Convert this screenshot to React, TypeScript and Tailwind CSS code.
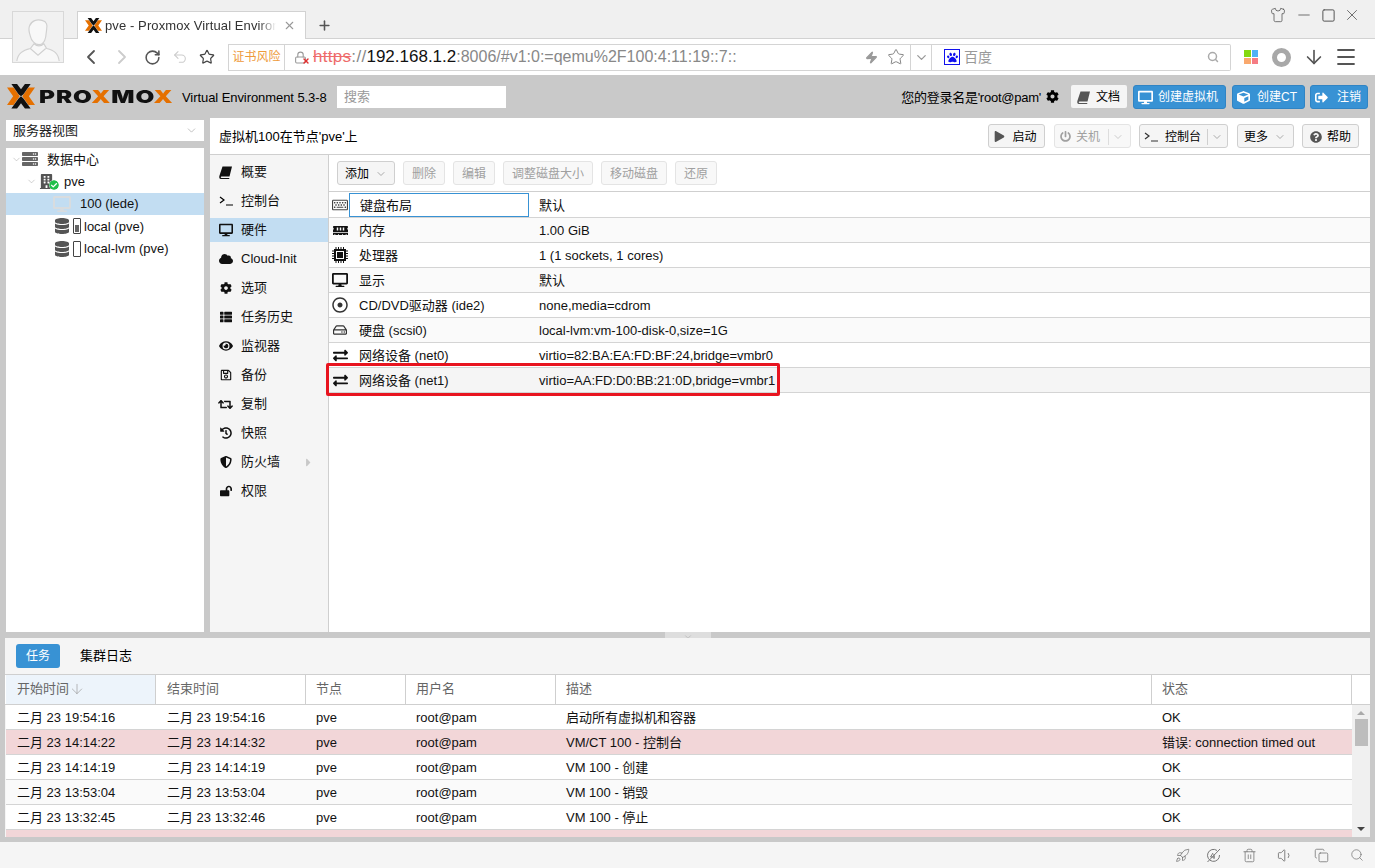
import React from "react";
import { ChevronLeft, ChevronRight, ChevronDown, RotateCw, Undo2, Star, Plus, X, Shirt, Minus, Square, Search, ArrowDown, Menu, Zap, Lock, Rocket, Trash2, Volume1, Copy } from "lucide-react";
import { FaDesktop, FaCloud, FaCog, FaThList, FaEye, FaRegSave, FaRetweet, FaHistory, FaShieldAlt, FaLockOpen, FaExchangeAlt, FaRegHdd, FaMemory, FaRegKeyboard, FaCube, FaSignOutAlt, FaPlay, FaPowerOff, FaQuestionCircle, FaDatabase, FaServer, FaBuilding, FaCheckCircle, FaPaw, FaCaretRight, FaRegDotCircle } from "react-icons/fa";

const font = "[font-family:'Liberation_Sans','Noto_Sans_CJK_SC',sans-serif]";

function PxLogo({ s }: { s: number }) {
  return (
    <svg width={s} height={s * 0.88} viewBox="0 0 32 28" className="shrink-0">
      <path d="M0 4h7.500l7 10-7 10H0l7-10z" fill="#e57000" />
      <path d="M32 4h-7.500l-7 10 7 10H32l-7-10z" fill="#e57000" />
      <path d="M5 0h6.500L16 6l4.500-6H27L18.800 11.500 16 14l-2.800-2.500zM5 28h6.500L16 22l4.500 6H27l-8.200-11.500L16 14l-2.800 2.500z" fill="#111" />
    </svg>
  );
}

function BookIcon({ c = "#111" }: { c?: string }) {
  return (
    <svg width="13" height="13" viewBox="0 0 13 13" className="shrink-0">
      <path d="M3.500 0.500H13L10.500 10.500H2.500C1.500 10.500 1.500 12 2.500 12H10.500L10 13H2C0 13 0 11 0.500 9.500z" fill={c} />
    </svg>
  );
}

function ChipIcon() {
  return (
    <svg width="16" height="16" viewBox="0 0 16 16" className="shrink-0">
      <rect x="2" y="2" width="12" height="12" fill="#111" />
      <rect x="4" y="4" width="8" height="8" fill="#fff" />
      <rect x="5" y="5" width="6" height="6" fill="#111" />
      <path d="M0 4h2M0 6.500h2M0 9h2M0 11.500h2M14 4h2M14 6.500h2M14 9h2M14 11.500h2M4 0v2M6.500 0v2M9 0v2M11.500 0v2M4 14v2M6.500 14v2M9 14v2M11.500 14v2" stroke="#111" strokeWidth="1" />
    </svg>
  );
}

function DialIcon() {
  return (
    <svg width="15" height="15" viewBox="0 0 15 15" fill="none" stroke="currentColor" strokeWidth="1" className="shrink-0">
      <path d="M11 2.500A6 6 0 1 0 13.500 7" />
      <path d="M1.500 14L14 1" />
      <path d="M7 5L4.500 9H9M8 6v5" />
    </svg>
  );
}

function Terminal({ c = "text-black" }: { c?: string }) {
  return (
    <svg width="14" height="10" viewBox="0 0 14 10" fill="none" stroke="currentColor" strokeWidth="1.200" className={`shrink-0 ${c}`}>
      <path d="M1 1l4 3-4 3M7 9h7" />
    </svg>
  );
}

function TopBtn({ icon, label, w, gap }: { icon: React.ReactNode; label: string; w: string; gap: string }) {
  return (
    <div className={`${w} ${gap} h-[24px] pt-px rounded-[3px] bg-[#3892d4] border border-[#3084c4] text-white text-[12px] flex items-center pl-[4px]`}>
      {icon}
      <span>{label}</span>
    </div>
  );
}

function GreyBtn({ w, children, off }: { w: string; children: React.ReactNode; off?: boolean }) {
  return (
    <div className={`${w} h-[24px] pt-px rounded-[3px] border text-[12px] flex items-center justify-center shrink-0 ${off ? "bg-[#f8f8f8] border-[#e4e4e4] text-[#a0a0a0]" : "bg-[#f5f5f5] border-[#cfcfcf] text-black"}`}>
      {children}
    </div>
  );
}

const menu: [React.ReactNode, string][] = [
  [<BookIcon />, "概要"],
  [<Terminal />, "控制台"],
  [<FaDesktop size={14} />, "硬件"],
  [<FaCloud size={14} />, "Cloud-Init"],
  [<FaCog size={12} />, "选项"],
  [<FaThList size={12} />, "任务历史"],
  [<FaEye size={14} />, "监视器"],
  [<FaRegSave size={12} />, "备份"],
  [<FaRetweet size={15} />, "复制"],
  [<FaHistory size={12} />, "快照"],
  [<FaShieldAlt size={12} />, "防火墙"],
  [<FaLockOpen size={12} />, "权限"],
];

const hw: [React.ReactNode, string, string][] = [
  [<FaRegKeyboard size={16} className="text-[#444]" />, "键盘布局", "默认"],
  [<FaMemory size={15} />, "内存", "1.00 GiB"],
  [<ChipIcon />, "处理器", "1 (1 sockets, 1 cores)"],
  [<FaDesktop size={16} />, "显示", "默认"],
  [<FaRegDotCircle size={16} className="text-[#333]" />, "CD/DVD驱动器 (ide2)", "none,media=cdrom"],
  [<FaRegHdd size={14} className="text-[#333]" />, "硬盘 (scsi0)", "local-lvm:vm-100-disk-0,size=1G"],
  [<FaExchangeAlt size={15} />, "网络设备 (net0)", "virtio=82:BA:EA:FD:BF:24,bridge=vmbr0"],
  [<FaExchangeAlt size={15} />, "网络设备 (net1)", "virtio=AA:FD:D0:BB:21:0D,bridge=vmbr1"],
];

const tasks = [
  ["二月 23 19:54:16", "二月 23 19:54:16", "pve", "root@pam", "启动所有虚拟机和容器", "OK"],
  ["二月 23 14:14:22", "二月 23 14:14:32", "pve", "root@pam", "VM/CT 100 - 控制台", "错误: connection timed out"],
  ["二月 23 14:14:19", "二月 23 14:14:19", "pve", "root@pam", "VM 100 - 创建", "OK"],
  ["二月 23 13:53:04", "二月 23 13:53:04", "pve", "root@pam", "VM 100 - 销毁", "OK"],
  ["二月 23 13:32:45", "二月 23 13:32:46", "pve", "root@pam", "VM 100 - 停止", "OK"],
  ["", "", "", "", "", ""],
];
const cols = ["w-[150px] pl-[11px]", "w-[150px] pl-[11px]", "w-[100px] pl-[10px]", "w-[150px] pl-[10px]", "w-[596px] pl-[10px]", "w-[200px] pl-[10px]"];
const heads = ["开始时间", "结束时间", "节点", "用户名", "描述", "状态"];

export default function App() {
  return (
    <div className={`w-[1375px] h-[868px] overflow-hidden flex flex-col relative text-[13px] text-[#111] bg-white ${font}`}>
      {/* browser tab strip */}
      <div className="h-[39px] shrink-0 bg-[#f0f0f0] border-b border-[#d2d2d2] flex items-end pl-[77px]">
        <div className="w-[229px] h-[28px] -mb-px bg-white border border-b-0 border-[#d2d2d2] flex items-center pl-[7px] pr-[9px] gap-[3px] text-[13px] text-[#333]">
          <PxLogo s={17} />
          <span className="whitespace-nowrap overflow-hidden flex-1 tracking-[0.1px] mr-[4px] [mask-image:linear-gradient(to_right,black_90%,transparent)]">pve - Proxmox Virtual Enviror</span>
          <X size={13} className="text-[#999] shrink-0" />
        </div>
        <Plus size={15} className="text-[#555] ml-[11px] mb-[5px]" strokeWidth={2.5} />
        <div className="flex-1" />
        <div className="flex items-center text-[#555] pr-[14px] mb-[14px]">
          <Shirt size={16} strokeWidth={1.2} />
          <Minus size={18} strokeWidth={1.1} className="ml-[9px]" />
          <Square size={15} strokeWidth={1.6} className="ml-[8px]" />
          <X size={18} strokeWidth={1.1} className="ml-[7px]" />
        </div>
      </div>
      {/* avatar */}
      <div className="absolute left-[12px] top-[11px] w-[52px] h-[52px] bg-[#f1f1f1] border border-[#d8d8d8] overflow-hidden">
        <svg viewBox="0 0 52 52" className="w-full h-full" fill="none" stroke="#d0d0d0" strokeWidth="1.2">
          <path d="M17 15c2-6 8-8 14-6 4 1 5 5 4 9l-1 8c-1 5-4 8-7 8-4 0-8-4-9-9-1-3-2-7-1-10z" fill="#f8f8f8" />
          <path d="M4 51c1-8 6-11 14-13l4-5c3 3 7 3 10 0l3 5c8 2 12 5 13 13" fill="#f8f8f8" />
          <path d="M18 38l8 7 8-7" />
        </svg>
      </div>
      {/* browser toolbar */}
      <div className="h-[36px] shrink-0 bg-white flex items-center pl-[79px] text-[#555]">
        <ChevronLeft size={24} strokeWidth={1.8} className="text-[#555]" />
        <ChevronRight size={24} strokeWidth={1.8} className="text-[#ccc] ml-[7px]" />
        <RotateCw size={17} strokeWidth={2.2} className="ml-[10px] text-[#555]" />
        <Undo2 size={16} strokeWidth={1.6} className="ml-[11px] text-[#ccc]" />
        <Star size={16} strokeWidth={1.8} className="ml-[11px] text-[#444]" />
        <div className="ml-[13px] w-[704px] h-[27px] border border-[#d4d4d4] flex items-center text-[16px]">
          <div className="w-[56px] h-full border-r border-[#d4d4d4] flex items-center justify-center text-[12px] text-[#ee9a3a] shrink-0">证书风险</div>
          <div className="relative ml-[9px] mr-[6px]">
            <Lock size={13} className="text-[#999]" />
            <X size={8} strokeWidth={4} className="absolute -right-[3px] -bottom-[1px] text-[#e03030]" />
          </div>
          <span className="text-[#ee6b6b] line-through text-[17px] tracking-[0.3px]">https</span>
          <span className="text-[#888] text-[17px] tracking-[0.3px]">://</span>
          <span className="text-[#111] text-[17px]">192.168.1.2</span>
          <span className="text-[#888]">:8006/#v1:0:=qemu%2F100:4:11:19::7::</span>
          <div className="flex-1" />
          <Zap size={13} className="text-[#999] fill-[#999] mr-[9px]" />
          <Star size={18} strokeWidth={1.2} className="text-[#777] mr-[5px]" />
          <div className="w-[21px] h-full border-l border-[#d4d4d4] flex items-center justify-center"><ChevronDown size={15} className="text-[#999]" /></div>
        </div>
        <div className="w-[299px] h-[27px] border border-l-0 border-[#d4d4d4] rounded-r-[2px] flex items-center pl-[12px] pr-[11px]">
          <div className="w-[16px] h-[16px] border-[1.5px] border-[#1111ee] flex items-center justify-center"><FaPaw size={11} className="text-[#1111ee]" /></div>
          <span className="ml-[4px] text-[14px] text-[#999]">百度</span>
          <div className="flex-1" />
          <Search size={12} strokeWidth={3} className="text-[#aaa]" />
        </div>
        <div className="ml-[13px] grid grid-cols-2 gap-px w-[14px] h-[14px]">
          <div className="bg-[#84d80e]" /><div className="bg-[#4fb1f5]" /><div className="bg-[#f9a86d]" /><div className="bg-[#f57c84]" />
        </div>
        <div className="ml-[14px] w-[19px] h-[19px] rounded-full border-[5px] border-[#a8a8a8]" />
        <ArrowDown size={22} strokeWidth={1.8} className="ml-[12px] text-[#555]" />
        <Menu size={24} strokeWidth={1.8} className="ml-[9px] text-[#555]" />
      </div>

      {/* PVE */}
      <div className="flex-1 min-h-0 bg-[#c9c9c9] flex flex-col">
        <div className="h-[43px] shrink-0 flex items-center pl-[7px] pr-[7px]">
          <PxLogo s={28} />
          <span className="ml-[4px] w-[143px] text-[18px] leading-none font-black [font-family:Inter,sans-serif] tracking-[0.7px] whitespace-nowrap text-[#111] origin-left scale-x-[1.35]">PRO<span className="text-[#e57000]">X</span>MO<span className="text-[#e57000]">X</span></span>
          <span className="w-[155px] pt-[2px] tracking-[-0.07px] whitespace-nowrap text-black">Virtual Environment 5.3-8</span>
          <div className="w-[169px] h-[22px] bg-white text-[#999] flex items-center pl-[7px]">搜索</div>
          <div className="flex-1" />
          <span className="pt-[2px] text-black whitespace-nowrap tracking-[-0.25px]">您的登录名是'root@pam'</span>
          <FaCog size={13} className="text-black ml-[5px]" />
          <div className="ml-[12px] w-[56px] h-[23px] pt-px bg-[#f5f5f5] rounded-[2px] flex items-center pl-[6px] gap-[6px] text-black text-[12px]"><BookIcon c="#555" />文档</div>
          <div className="ml-[6px]"><TopBtn w="w-[93px]" gap="gap-[5px]" icon={<FaDesktop size={15} />} label="创建虚拟机" /></div>
          <div className="ml-[6px]"><TopBtn w="w-[73px]" gap="gap-[7px]" icon={<FaCube size={13} />} label="创建CT" /></div>
          <div className="ml-[5px]"><TopBtn w="w-[58px]" gap="gap-[9px]" icon={<FaSignOutAlt size={13} />} label="注销" /></div>
        </div>

        <div className="flex-1 min-h-0 flex pl-[6px] pr-[5px] gap-[6px]">
          {/* left column */}
          <div className="w-[198px] shrink-0 pt-[2px] flex flex-col gap-[7px]">
            <div className="h-[21px] bg-white flex items-center pl-[7px] pr-[6px] text-[#222]">
              <span className="flex-1">服务器视图</span>
              <ChevronDown size={13} strokeWidth={1.3} className="text-[#aaa]" />
            </div>
            <div className="flex-1 bg-white">
              <div className="h-[22.5px] flex items-center pl-[5px]">
                <ChevronDown size={11} strokeWidth={1.2} className="text-[#aaa]" />
                <FaServer size={16} className="text-[#666]" />
                <span className="ml-[9px]">数据中心</span>
              </div>
              <div className="h-[22.5px] flex items-center pl-[20px]">
                <ChevronDown size={11} strokeWidth={1.2} className="text-[#aaa]" />
                <div className="relative ml-[2px]">
                  <FaBuilding size={15} className="text-[#555]" />
                  <FaCheckCircle size={10} className="absolute -right-[5px] -bottom-[1px] text-[#21bf4b] bg-white rounded-full" />
                </div>
                <span className="ml-[10px]">pve</span>
              </div>
              <div className="h-[22px] bg-[#c2ddf2] flex items-center pl-[47px]">
                <FaDesktop size={18} className="text-[#d8dcdf]" />
                <span className="ml-[9px]">100 (lede)</span>
              </div>
              <div className="h-[22.5px] flex items-center pl-[48px]">
                <FaDatabase size={16} className="text-[#555]" />
                <div className="ml-[3px] w-[8px] h-[16px] border border-[#444] rounded-[1px] flex items-end p-px"><div className="w-full h-[7px] bg-[#666]" /></div>
                <span className="ml-[3px]">local (pve)</span>
              </div>
              <div className="h-[22.5px] flex items-center pl-[48px]">
                <FaDatabase size={16} className="text-[#555]" />
                <div className="ml-[3px] w-[8px] h-[16px] border border-[#444] rounded-[1px]" />
                <span className="ml-[3px]">local-lvm (pve)</span>
              </div>
            </div>
          </div>

          {/* right */}
          <div className="flex-1 min-w-0 flex flex-col bg-white">
            <div className="h-[37px] shrink-0 border-b border-[#cfcfcf] flex items-center pl-[9px] pr-[11px] gap-[8.5px]">
              <span className="flex-1 pt-px text-black">虚拟机100在节点'pve'上</span>
              <GreyBtn w="w-[57px] pr-[2px]"><FaPlay size={11} className="text-[#555] mr-[7px]" />启动</GreyBtn>
              <GreyBtn off w="w-[77px]"><FaPowerOff size={11} className="mr-[5px]" />关机<span className="w-px h-[16px] bg-[#ddd] ml-[8px] mr-[3px]" /><ChevronDown size={12} className="text-[#ccc]" /></GreyBtn>
              <GreyBtn w="w-[89px]"><Terminal c="text-[#333] mr-[7px]" />控制台<span className="w-px h-[16px] bg-[#cfcfcf] ml-[6px] mr-[3px]" /><ChevronDown size={12} className="text-[#aaa]" /></GreyBtn>
              <GreyBtn w="w-[57px]">更多<ChevronDown size={12} className="text-[#aaa] ml-[6px]" /></GreyBtn>
              <GreyBtn w="w-[57px]"><FaQuestionCircle size={12} className="text-[#555] mr-[5px]" />帮助</GreyBtn>
            </div>
            <div className="flex-1 min-h-0 flex">
              <div className="w-[119px] shrink-0 bg-[#f5f5f5] border-r border-[#cfcfcf] pt-[5px] flex flex-col gap-[5px]">
                {menu.map(([ic, t], i) => (
                  <div key={t} className={`h-[24px] flex items-center ${i === 2 ? "bg-[#c2ddf2]" : ""}`}>
                    <span className="w-[31px] flex justify-center text-[#111]">{ic}</span>
                    <span className="flex-1">{t}</span>
                    {t === "防火墙" && <FaCaretRight size={13} className="text-[#c8c8c8] mr-[13px]" />}
                  </div>
                ))}
              </div>
              <div className="flex-1 min-w-0 flex flex-col relative">
                <div className="h-[37px] shrink-0 mb-px border-b border-[#cfcfcf] flex items-center pl-[8px] gap-[8px]">
                  <GreyBtn w="w-[58px]">添加<ChevronDown size={12} className="text-[#aaa] ml-[6px]" /></GreyBtn>
                  <GreyBtn off w="w-[42px]">删除</GreyBtn>
                  <GreyBtn off w="w-[42px]">编辑</GreyBtn>
                  <GreyBtn off w="w-[90px]">调整磁盘大小</GreyBtn>
                  <GreyBtn off w="w-[66px]">移动磁盘</GreyBtn>
                  <GreyBtn off w="w-[42px]">还原</GreyBtn>
                </div>
                {hw.map(([ic, k, v], i) => (
                  <div key={k} className={`h-[25px] shrink-0 border-b border-[#d4d4d4] flex items-center ${i === 7 ? "bg-[#f5f5f5]" : i % 2 ? "bg-[#fafafa]" : "bg-white"}`}>
                    <span className="w-[18px] ml-[2px] flex justify-center text-[#111]">{ic}</span>
                    <div className={`w-[180px] h-[24px] pt-px flex items-center shrink-0 pl-[10px] ${i === 0 ? "border border-[#3892d4]" : ""}`}>{k}</div>
                    <span className="ml-[10px] pt-px">{v}</span>
                  </div>
                ))}
                <div className="absolute left-[-3px] top-[208px] w-[454px] h-[33px] border-[3px] border-[#e8141f] rounded-[2px]" />
              </div>
            </div>
          </div>
        </div>

        {/* splitter */}
        <div className="h-[6px] shrink-0 flex justify-center"><div className="w-[46px] h-[6px] bg-[#dedede] flex justify-center items-start"><ChevronDown size={10} className="text-[#bbb]" /></div></div>

        {/* bottom */}
        <div className="h-[199px] shrink-0 mx-[5px] bg-[#f5f5f5] flex flex-col overflow-hidden">
          <div className="h-[37px] shrink-0 flex items-center pl-[11px] border-b border-[#cfcfcf]">
            <div className="w-[44px] h-[24px] rounded-[3px] bg-[#3892d4] text-white text-[12px] flex items-center justify-center">任务</div>
            <span className="ml-[20px] text-black">集群日志</span>
          </div>
          <div className="h-[30px] shrink-0 flex pl-px bg-white border-b border-[#cfcfcf] text-[#666]">
            {heads.map((h, i) => (
              <div key={h} className={`${cols[i]} shrink-0 flex items-center pb-px border-r border-[#cfcfcf] ${i === 0 ? "bg-[#edf4fb]" : ""}`}>
                {h}
                {i === 0 && <ArrowDown size={16} strokeWidth={1} className="text-[#999]" />}
              </div>
            ))}
            <div className="flex-1" />
          </div>
          <div className="flex-1 min-h-0 flex">
            <div className="w-[1347px] shrink-0 pl-px">
              {tasks.map((r, ri) => (
                <div key={ri} className={`h-[25px] border-b border-[#d4d4d4] flex ${ri === 1 || ri === 5 ? "bg-[#f2d6d8]" : ri % 2 ? "bg-[#fafafa]" : "bg-white"}`}>
                  {r.map((c, i) => (
                    <div key={i} className={`${cols[i]} shrink-0 pt-[2px] flex items-center whitespace-nowrap`}>{c}</div>
                  ))}
                </div>
              ))}
            </div>
            <div className="flex-1 bg-[#f0f0f0] flex flex-col items-center pt-[6px]">
              <div className="w-0 h-0 border-x-[4px] border-x-transparent border-b-[4px] border-b-[#aaa]" />
              <div className="w-[13px] h-[27px] mt-[4px] bg-[#bdbdbd]" />
              <div className="flex-1" />
              <div className="w-0 h-0 border-x-[4px] border-x-transparent border-t-[4px] border-t-[#444] mb-[6px]" />
            </div>
          </div>
        </div>
        <div className="h-[5px] shrink-0" />
      </div>

      {/* browser status bar */}
      <div className="h-[26px] shrink-0 bg-[#f5f5f5] flex items-center justify-end pr-[11px] text-[#777]">
        <Rocket size={15} strokeWidth={1.3} />
        <span className="ml-[16px]"><DialIcon /></span>
        <Trash2 size={15} strokeWidth={1.3} className="ml-[21px]" />
        <Volume1 size={17} strokeWidth={1.3} className="ml-[20px]" />
        <Copy size={15} strokeWidth={1.3} className="ml-[20px]" />
        <Search size={14} strokeWidth={1.3} className="ml-[21px]" />
      </div>
    </div>
  );
}
